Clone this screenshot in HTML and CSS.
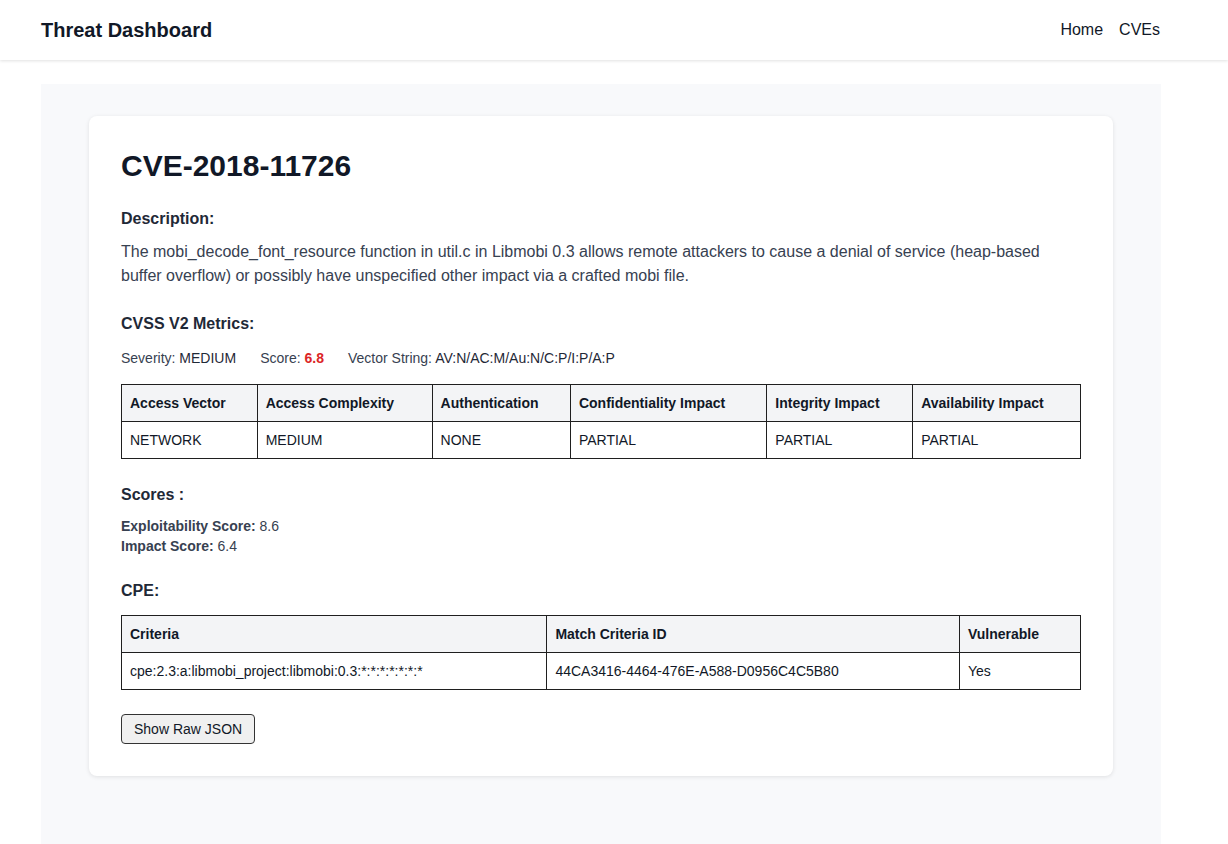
FILE: index.html
```html
<!DOCTYPE html>
<html lang="en">
<head>
<meta charset="utf-8">
<title>Threat Dashboard</title>
<link rel="stylesheet" href="styles.css">
</head>
<body>
<header class="topbar">
  <div class="topbar-inner">
    <div class="brand">Threat Dashboard</div>
    <nav class="nav">
      <a href="#" class="nav-link">Home</a>
      <a href="#" class="nav-link">CVEs</a>
    </nav>
  </div>
</header>
<main class="page">
  <section class="card">
    <h1 class="cve-title">CVE-2018-11726</h1>

    <h3 class="section-title first">Description:</h3>
    <p class="description">The mobi_decode_font_resource function in util.c in Libmobi 0.3 allows remote attackers to cause a denial of service (heap-based buffer overflow) or possibly have unspecified other impact via a crafted mobi file.</p>

    <h3 class="section-title">CVSS V2 Metrics:</h3>
    <div class="metrics-line">
      <span class="metric">Severity: <span class="metric-val">MEDIUM</span></span>
      <span class="metric">Score: <strong class="score">6.8</strong></span>
      <span class="metric">Vector String: <span class="metric-val">AV:N/AC:M/Au:N/C:P/I:P/A:P</span></span>
    </div>
    <table class="data-table">
      <thead>
        <tr>
          <th>Access Vector</th>
          <th>Access Complexity</th>
          <th>Authentication</th>
          <th>Confidentiality Impact</th>
          <th>Integrity Impact</th>
          <th>Availability Impact</th>
        </tr>
      </thead>
      <tbody>
        <tr>
          <td>NETWORK</td>
          <td>MEDIUM</td>
          <td>NONE</td>
          <td>PARTIAL</td>
          <td>PARTIAL</td>
          <td>PARTIAL</td>
        </tr>
      </tbody>
    </table>

    <h3 class="section-title">Scores :</h3>
    <div class="scores">
      <div><strong>Exploitability Score:</strong> 8.6</div>
      <div><strong>Impact Score:</strong> 6.4</div>
    </div>

    <h3 class="section-title cpe-title">CPE:</h3>
    <table class="data-table">
      <thead>
        <tr>
          <th>Criteria</th>
          <th>Match Criteria ID</th>
          <th>Vulnerable</th>
        </tr>
      </thead>
      <tbody>
        <tr>
          <td>cpe:2.3:a:libmobi_project:libmobi:0.3:*:*:*:*:*:*:*</td>
          <td>44CA3416-4464-476E-A588-D0956C4C5B80</td>
          <td>Yes</td>
        </tr>
      </tbody>
    </table>

    <button class="raw-btn" type="button">Show Raw JSON</button>
  </section>
</main>
</body>
</html>
```

FILE: styles.css
```css
* { box-sizing: border-box; }

html, body {
  margin: 0;
  padding: 0;
  background: #ffffff;
  font-family: "Liberation Sans", Arial, sans-serif;
  color: #111827;
}

.topbar {
  height: 60px;
  background: #ffffff;
  box-shadow: 0 1px 3px rgba(0, 0, 0, 0.12);
}

.topbar-inner {
  height: 60px;
  margin: 0 68px 0 41px;
  display: flex;
  align-items: center;
  justify-content: space-between;
}

.brand {
  font-size: 20px;
  font-weight: bold;
  color: #111827;
}

.nav {
  display: flex;
  gap: 16px;
}

.nav-link {
  font-size: 16px;
  color: #111827;
  text-decoration: none;
}

.page {
  margin: 24px 67px 0 41px;
  background: #f8f9fb;
  padding: 32px 48px 68px;
  min-height: 760px;
}

.card {
  background: #ffffff;
  border-radius: 8px;
  box-shadow: 0 1px 4px rgba(0, 0, 0, 0.1);
  padding: 32px;
}

.cve-title {
  margin: 0;
  font-size: 30px;
  line-height: 36px;
  font-weight: bold;
  color: #111827;
}

.section-title {
  margin: 24px 0 0;
  font-size: 16px;
  line-height: 24px;
  font-weight: bold;
  color: #1f2937;
}

.section-title.first {
  margin-top: 23px;
}

.description {
  margin: 9px 0 0;
  font-size: 16px;
  line-height: 24px;
  color: #374151;
}

.metrics-line {
  margin: 12px 0 0;
  font-size: 14px;
  line-height: 20px;
  color: #374151;
  display: flex;
  gap: 24px;
}

.metric-val {
  color: #1f2937;
}

.score {
  color: #dc2626;
  font-weight: bold;
}

.data-table {
  margin-top: 16px;
  width: 100%;
  border-collapse: collapse;
  font-size: 14px;
  line-height: 20px;
  color: #111827;
}

.data-table th,
.data-table td {
  border: 1px solid #1f1f1f;
  padding: 8px;
  text-align: left;
}

.data-table th {
  background: #f3f4f6;
  font-weight: bold;
}

.scores {
  margin-top: 9px;
  font-size: 14px;
  line-height: 20px;
  color: #374151;
}

.scores strong {
  color: #374151;
}

.cpe-title {
  margin-top: 23px;
}

.cpe-title + .data-table {
  margin-top: 12px;
}

.raw-btn {
  display: block;
  margin-top: 24px;
  height: 30px;
  padding: 0 12px;
  font-family: "Liberation Sans", Arial, sans-serif;
  font-size: 14px;
  color: #111827;
  background: #f0f0f0;
  border: 1px solid #333333;
  border-radius: 4px;
  cursor: pointer;
}
```
